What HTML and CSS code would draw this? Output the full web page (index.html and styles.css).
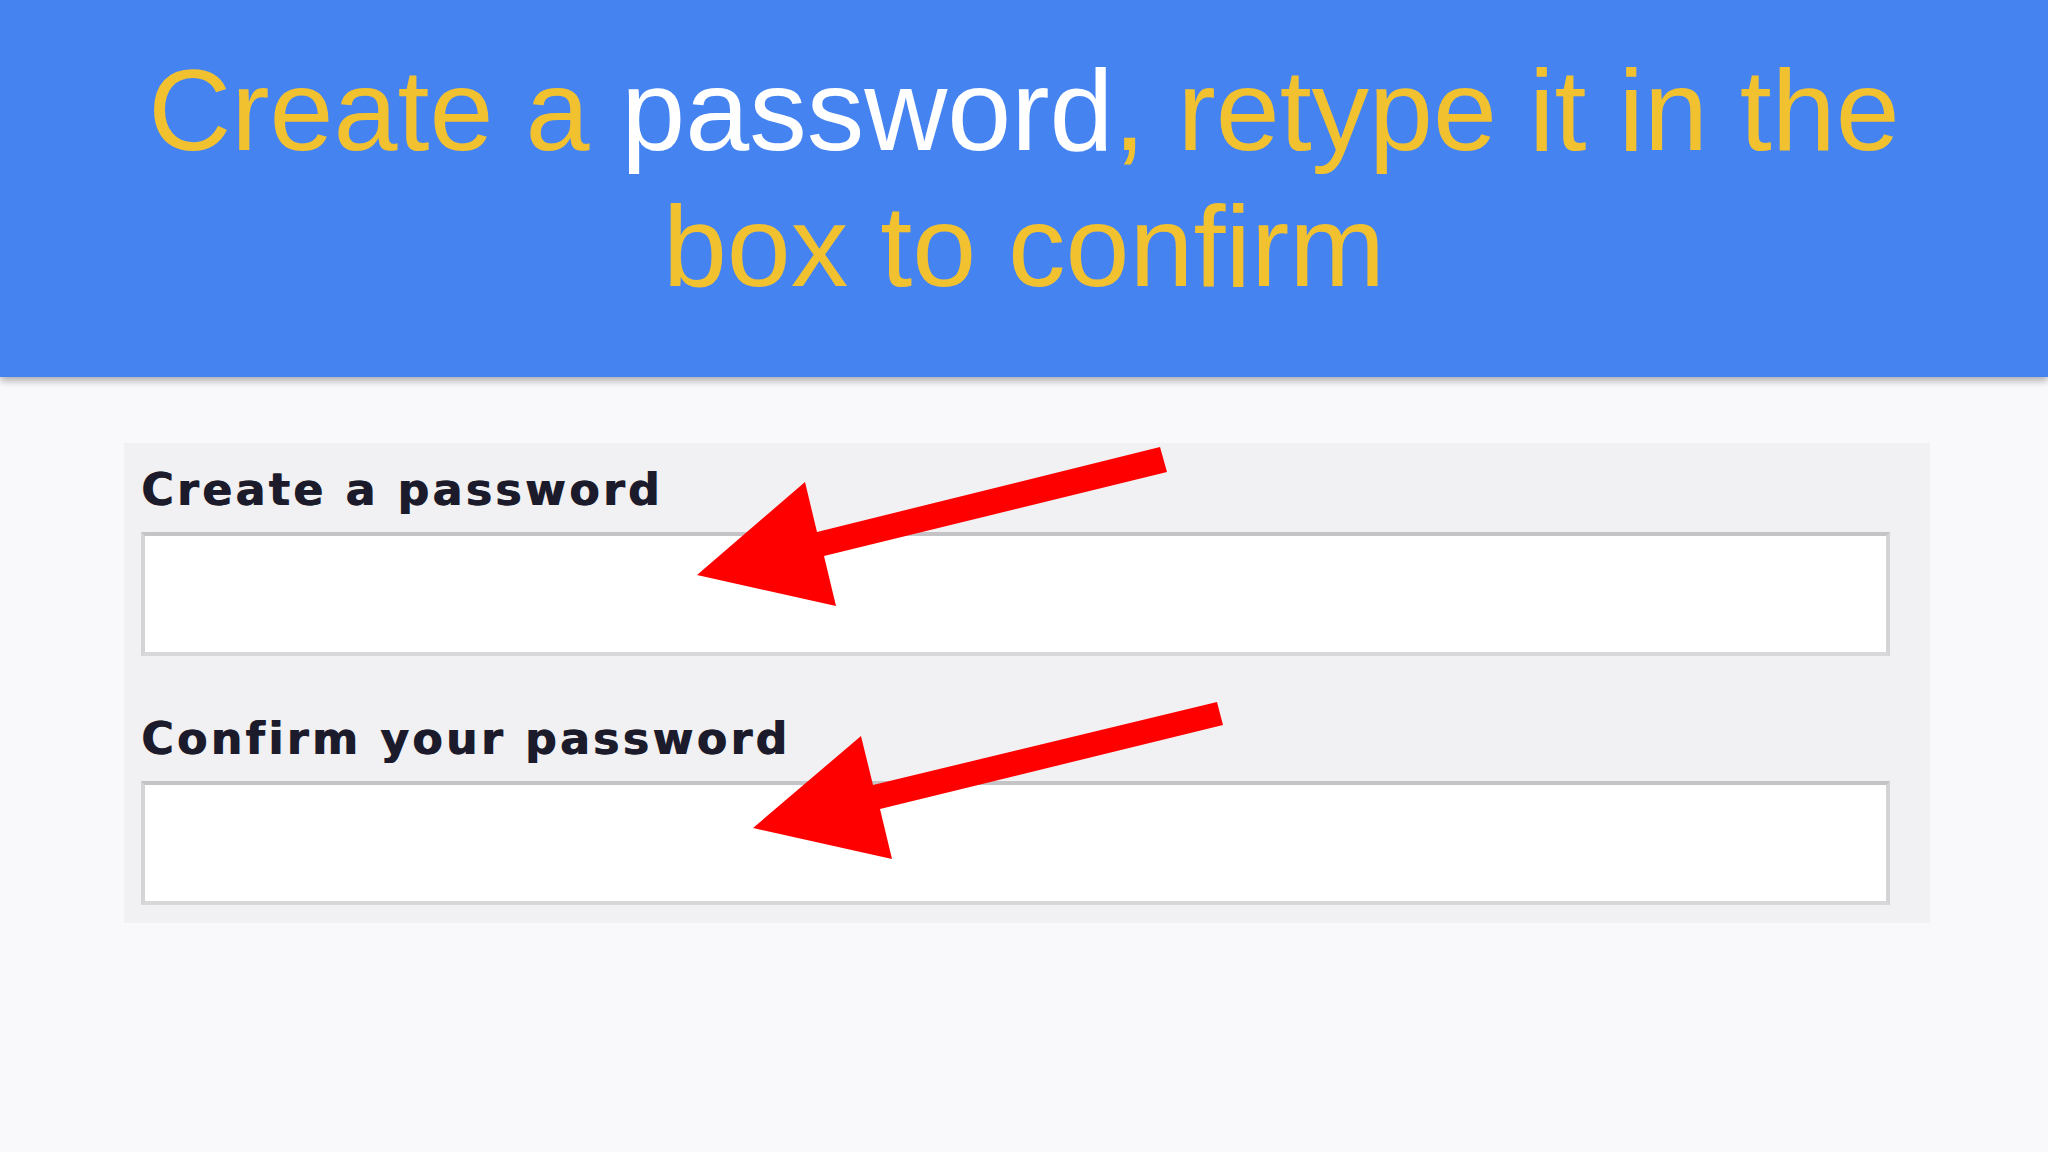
FILE: index.html
```html
<!DOCTYPE html>
<html lang="en">
<head>
  <meta charset="UTF-8" />
  <meta name="viewport" content="width=device-width, initial-scale=1.0" />
  <title>Create a password</title>
  <link rel="stylesheet" href="styles.css">
</head>
<body>
  <header class="banner">
    <h1 class="banner-title">Create a <span class="hl">password</span>, retype it in the<br>box to confirm</h1>
  </header>

  <form class="signup-panel">
    <div class="field">
      <label for="pw">Create a password</label>
      <input type="password" id="pw" />
    </div>
    <div class="field">
      <label for="pw2">Confirm your password</label>
      <input type="password" id="pw2" />
    </div>
  </form>

  <!-- callout arrows drawn over the form -->
  <svg class="arrows" width="2048" height="1152" viewBox="0 0 2048 1152">
    <polygon points="1160,447 1167,472 824,556 836,606 697,575 805,482 817,532" />
    <polygon points="1217,702 1223,725 880,809 892,859 753,828 861,736 873,785" />
  </svg>
</body>
</html>
```

FILE: styles.css
```css
body {
  margin: 0;
  padding: 0;
  background-color: #f9f8fa;
  font-family: 'Liberation Sans', Arial, sans-serif;
  position: relative;
  min-height: 1152px;
}

.banner {
  height: 377px;
  box-sizing: border-box;
  padding-top: 42px;
  background-color: #4584f0;
  box-shadow: 0 3px 8px rgba(0, 0, 0, 0.35);
  text-align: center;
}

.banner-title {
  margin: 0;
  font-weight: normal;
  font-size: 115px;
  line-height: 136px;
  color: #f2c130;
}

.banner-title .hl {
  color: #fff;
}

.signup-panel {
  width: 1806px;
  box-sizing: border-box;
  margin: 66px 0 0 124px;
  padding: 22px 40px 18px 17px;
  background-color: #f1f0f2;
}

.field + .field {
  margin-top: 58px;
}

.field label {
  display: block;
  margin-bottom: 17px;
  font-family: 'DejaVu Sans', Verdana, sans-serif;
  font-weight: bold;
  font-size: 44px;
  line-height: 50px;
  letter-spacing: 3.5px;
  color: #1c1b2b;
  text-shadow: 1px 0 0 #1c1b2b;
}

.field input {
  display: block;
  width: 100%;
  height: 124px;
  box-sizing: border-box;
  margin: 0;
  border: 4px solid #d4d3d5;
  border-top-color: #c4c3c5;
  border-bottom-color: #d8d7d9;
  border-radius: 0;
  background-color: #fff;
  outline: none;
}

.arrows {
  position: absolute;
  top: 0;
  left: 0;
  pointer-events: none;
}

.arrows polygon {
  fill: #ff0000;
}
```
